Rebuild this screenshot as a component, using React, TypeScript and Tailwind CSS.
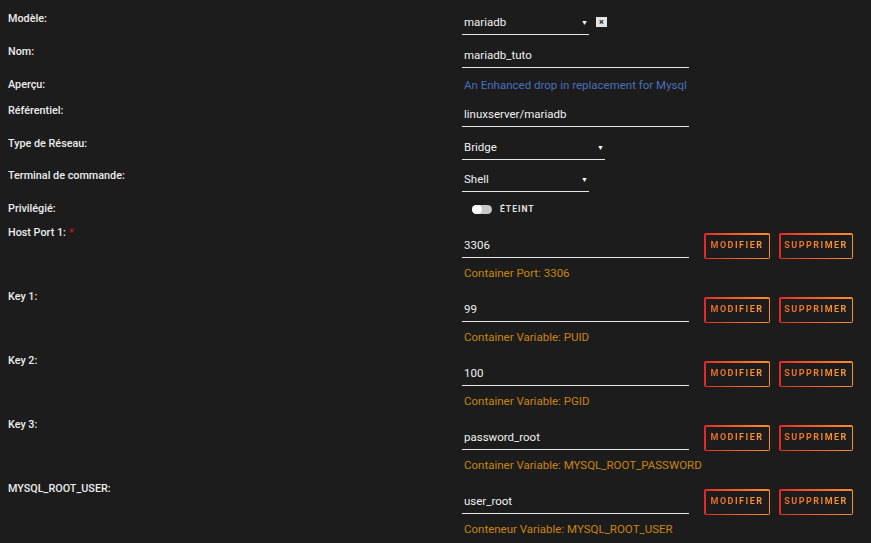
import React from "react";

const font = { fontFamily: "Roboto, 'Liberation Sans', sans-serif" };

function Label({ children, req }: { children: React.ReactNode; req?: boolean }) {
  return (
    <div className="w-[462px] shrink-0 pl-2 text-[10.8px] leading-[14px] font-medium text-[#ececec] whitespace-nowrap">
      {children}
      {req && <span className="ml-[3px] text-[#c0141c]">*</span>}
    </div>
  );
}

function Caret() {
  return <span className="text-[7px] leading-none text-white">▼</span>;
}

function Field({ w, value, caret }: { w: string; value: string; caret?: boolean }) {
  return (
    <div className={`${w} h-[23px] border-b border-[#e6e6e6] flex items-center justify-between pl-[2px] pr-[1px] text-[11.5px] text-[#f0f0f0]`}>
      <span>{value}</span>
      {caret && <Caret />}
    </div>
  );
}

function GradBtn({ label, w }: { label: string; w: string }) {
  return (
    <div className={`${w} h-[26px] p-[1.5px] rounded-[2px] bg-gradient-to-r from-[#e22828] to-[#ff8c2f]`}>
      <div className="w-full h-full bg-[#1c1c1c] flex items-center justify-center">
        <span className="text-[9px] font-bold tracking-[1.5px] bg-gradient-to-r from-[#ec6a2a] to-[#ff9a35] bg-clip-text text-transparent">
          {label}
        </span>
      </div>
    </div>
  );
}

function KeyRow({ label, value, help, req }: { label: string; value: string; help: string; req?: boolean }) {
  return (
    <div className="flex items-start h-[64px]">
      <Label req={req}>{label}</Label>
      <div className="w-[227px] shrink-0 pt-[8px]">
        <div className="h-[24px] border-b border-[#e6e6e6] flex items-center pl-[2px] text-[11.5px] text-[#f0f0f0]">
          {value}
        </div>
        <div className="pl-[2px] mt-[8px] text-[11.5px] leading-[14px] text-[#c9850f] whitespace-nowrap">{help}</div>
      </div>
      <div className="ml-[15px] mt-[7px] flex gap-[9px]">
        <GradBtn label="MODIFIER" w="w-[66px]" />
        <GradBtn label="SUPPRIMER" w="w-[74px]" />
      </div>
    </div>
  );
}

export default function App() {
  return (
    <div className="w-[871px] h-[543px] bg-[#1c1c1c] overflow-hidden pt-[12px]" style={font}>
      <div className="flex items-start h-[33px]">
        <Label>Modèle:</Label>
        <Field w="w-[127px]" value="mariadb" caret />
        <div className="ml-[7px] mt-[5px] w-[11px] h-[10px] bg-[#e4e4e4] flex items-center justify-center text-[9px] font-bold leading-none text-[#222]">
          ×
        </div>
      </div>
      <div className="flex items-start h-[33px]">
        <Label>Nom:</Label>
        <Field w="w-[227px]" value="mariadb_tuto" />
      </div>
      <div className="flex items-start h-[26px]">
        <Label>Aperçu:</Label>
        <div className="pl-[2px] text-[11.5px] leading-[14px] text-[#4a70bb] whitespace-nowrap">An Enhanced drop in replacement for Mysql</div>
      </div>
      <div className="flex items-start h-[33px]">
        <Label>Référentiel:</Label>
        <Field w="w-[227px]" value="linuxserver/mariadb" />
      </div>
      <div className="flex items-start h-[32px]">
        <Label>Type de Réseau:</Label>
        <Field w="w-[143px]" value="Bridge" caret />
      </div>
      <div className="flex items-start h-[33px]">
        <Label>Terminal de commande:</Label>
        <Field w="w-[127px]" value="Shell" caret />
      </div>
      <div className="flex items-start h-[24px]">
        <Label>Privilégié:</Label>
        <div className="flex items-center ml-[10px] mt-[1px] gap-[8px]">
          <div className="w-[20px] h-[9px] rounded-full bg-[#c8c8c8] relative">
            <div className="absolute left-0 top-0 w-[10px] h-[9px] rounded-full bg-white" />
          </div>
          <span className="text-[8.5px] font-bold tracking-[1px] text-[#e0e0e0]">ÉTEINT</span>
        </div>
      </div>
      <KeyRow label="Host Port 1:" req value="3306" help="Container Port: 3306" />
      <KeyRow label="Key 1:" value="99" help="Container Variable: PUID" />
      <KeyRow label="Key 2:" value="100" help="Container Variable: PGID" />
      <KeyRow label="Key 3:" value="password_root" help="Container Variable: MYSQL_ROOT_PASSWORD" />
      <KeyRow label="MYSQL_ROOT_USER:" value="user_root" help="Conteneur Variable: MYSQL_ROOT_USER" />
    </div>
  );
}
